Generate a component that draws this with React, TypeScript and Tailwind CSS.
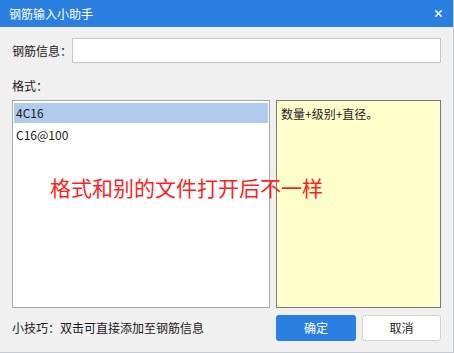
import { X } from 'lucide-react';

const font = { fontFamily: '"Noto Sans CJK SC", "Noto Sans", sans-serif' };

export default function App() {
  const items = ['4C16', 'C16@100'];
  const selected = 0;

  return (
    <div
      className="relative w-[454px] h-[353px] bg-[#f0f0f0] border-r border-b border-[#c5cad6] text-[12px] text-[#1a1a1a] flex flex-col"
      style={font}
    >
      <div className="h-[27px] shrink-0 bg-[#2b7fe0] pl-[9px] pr-[9px] flex items-center justify-between text-white">
        <span className="text-[12px] leading-none">钢筋输入小助手</span>
        <X size={11} strokeWidth={3} className="text-white" />
      </div>

      <div className="flex-1 flex flex-col px-[12px]">
        <div className="mt-[11px] flex items-center h-[25px]">
          <span className="w-[60px] shrink-0">钢筋信息：</span>
          <input className="flex-1 h-[25px] bg-white border border-[#c6c6cc] outline-none px-1" />
        </div>

        <div className="mt-[14px] h-[17px] leading-[17px]">格式：</div>

        <div className="mt-[6px] flex gap-[6px] h-[208px]">
          <div className="w-[258px] bg-white border border-[#a9a9a9] p-px">
            {items.map((item, i) => (
              <div key={item} className="h-[22px] py-px">
                <div
                  className={`h-[20px] leading-[20px] px-[2px] ${
                    i === selected ? 'bg-[#b0cbeb]' : ''
                  }`}
                >
                  {item}
                </div>
              </div>
            ))}
          </div>
          <div className="flex-1 bg-[#ffffcc] border border-[#7a7a7a] pl-[4px] pt-[4px] leading-[17px]">
            数量+级别+直径。
          </div>
        </div>

        <div className="mt-[7px] flex items-center">
          <span className="flex-1">小技巧：双击可直接添加至钢筋信息</span>
          <div className="flex gap-[6px]">
            <button className="w-[80px] h-[26px] rounded-[3px] bg-[#2b7fe0] text-white text-[12px]">
              确定
            </button>
            <button className="w-[79px] h-[26px] rounded-[3px] bg-white border border-[#d2d2d2] text-[12px] text-[#1a1a1a]">
              取消
            </button>
          </div>
        </div>
      </div>

      <div className="absolute left-[50px] top-[175px] text-[21px] leading-[24px] text-[#ff1f1f] whitespace-nowrap">
        格式和别的文件打开后不一样
      </div>
    </div>
  );
}
